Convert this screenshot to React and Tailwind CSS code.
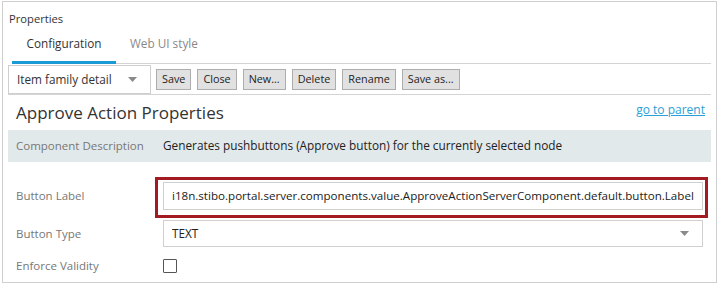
import React from "react";

function Btn({ children }) {
  return (
    <button className="h-[21px] px-[5px] border border-[#adadad] bg-[#e1e1e1] text-[10.8px] leading-none text-[#222]">
      {children}
    </button>
  );
}

function Caret() {
  return (
    <svg width="9" height="5" viewBox="0 0 9 5">
      <path d="M0 0 L9 0 L4.5 5 Z" fill="#8a8a8a" />
    </svg>
  );
}

export default function App() {
  return (
    <div className="w-[718px] h-[284px] bg-white pt-[1px] pl-[2px]" style={{ fontFamily: '"Open Sans", "Noto Sans", sans-serif' }}>
      <div className="w-[715px] h-[282px] border border-[#cfcfcf] flex flex-col px-[5px]">
        <div className="pt-[8px] pl-[1px] text-[11.2px] leading-[18px] text-[#333]">Properties</div>
        <div className="flex items-end h-[36px] ml-[4px]">
          <div className="w-[104px] h-full flex flex-col justify-between">
            <div className="pt-[6px] text-center text-[11.75px] leading-[18px] text-[#333]">Configuration</div>
            <div className="h-[3px] bg-[#1b9ad6]"></div>
          </div>
          <div className="flex-1 h-full flex flex-col justify-between">
            <div className="pt-[6px] pl-[14px] text-[11.75px] leading-[18px] text-[#888]">Web UI style</div>
            <div className="h-[1px] bg-[#d4d4d4]"></div>
          </div>
        </div>
        <div className="flex items-center h-[31px] border-b border-[#d4d4d4]">
          <div className="w-[143px] h-[29px] mt-[1px] border border-[#cfcfcf] flex items-center justify-between pl-[8px] pr-[13px] text-[11.75px] text-[#333]">
            <span>Item family detail</span>
            <Caret />
          </div>
          <div className="flex gap-[6px] ml-[5px] mt-[1px]">
            <Btn>Save</Btn>
            <Btn>Close</Btn>
            <Btn>New...</Btn>
            <Btn>Delete</Btn>
            <Btn>Rename</Btn>
            <Btn>Save as...</Btn>
          </div>
        </div>
        <div className="flex items-center justify-between h-[35px] pl-[8px] pr-[6px]">
          <span className="text-[17px] text-[#333]">Approve Action Properties</span>
          <a className="text-[12px] text-[#2a9fd8] underline mb-[6px]">go to parent</a>
        </div>
        <div className="flex items-center h-[32px] bg-[#e2e9eb] pl-[8px]">
          <span className="w-[147px] text-[11.5px] text-[#777]">Component Description</span>
          <span className="text-[11.8px] text-[#222]">Generates pushbuttons (Approve button) for the currently selected node</span>
        </div>
        <div className="flex flex-col pl-[8px] pt-[20px]">
          <div className="flex items-center h-[28px]">
            <span className="w-[147px] text-[11.5px] text-[#777]">Button Label</span>
            <div className="relative w-[540px] h-[28px] border border-[#d0d0d0] flex items-center pl-[8px] text-[11.6px] text-[#222] whitespace-nowrap">
              i18n.stibo.portal.server.components.value.ApproveActionServerComponent.default.button.Label
              <div className="absolute left-[-9px] top-[-6px] w-[553px] h-[41px] border-[3px] border-[#a31b22]"></div>
            </div>
          </div>
          <div className="flex items-center h-[27px] mt-[10px]">
            <span className="w-[147px] text-[11.5px] text-[#777]">Button Type</span>
            <div className="w-[540px] h-[27px] border border-[#d0d0d0] flex items-center justify-between pl-[8px] pr-[13px] text-[11.8px] text-[#222]">
              <span>TEXT</span>
              <Caret />
            </div>
          </div>
          <div className="flex items-center h-[14px] mt-[12px]">
            <span className="w-[147px] text-[11.5px] text-[#777]">Enforce Validity</span>
            <div className="w-[14px] h-[14px] border-[1.5px] border-[#555] rounded-[1px]"></div>
          </div>
        </div>
      </div>
    </div>
  );
}
